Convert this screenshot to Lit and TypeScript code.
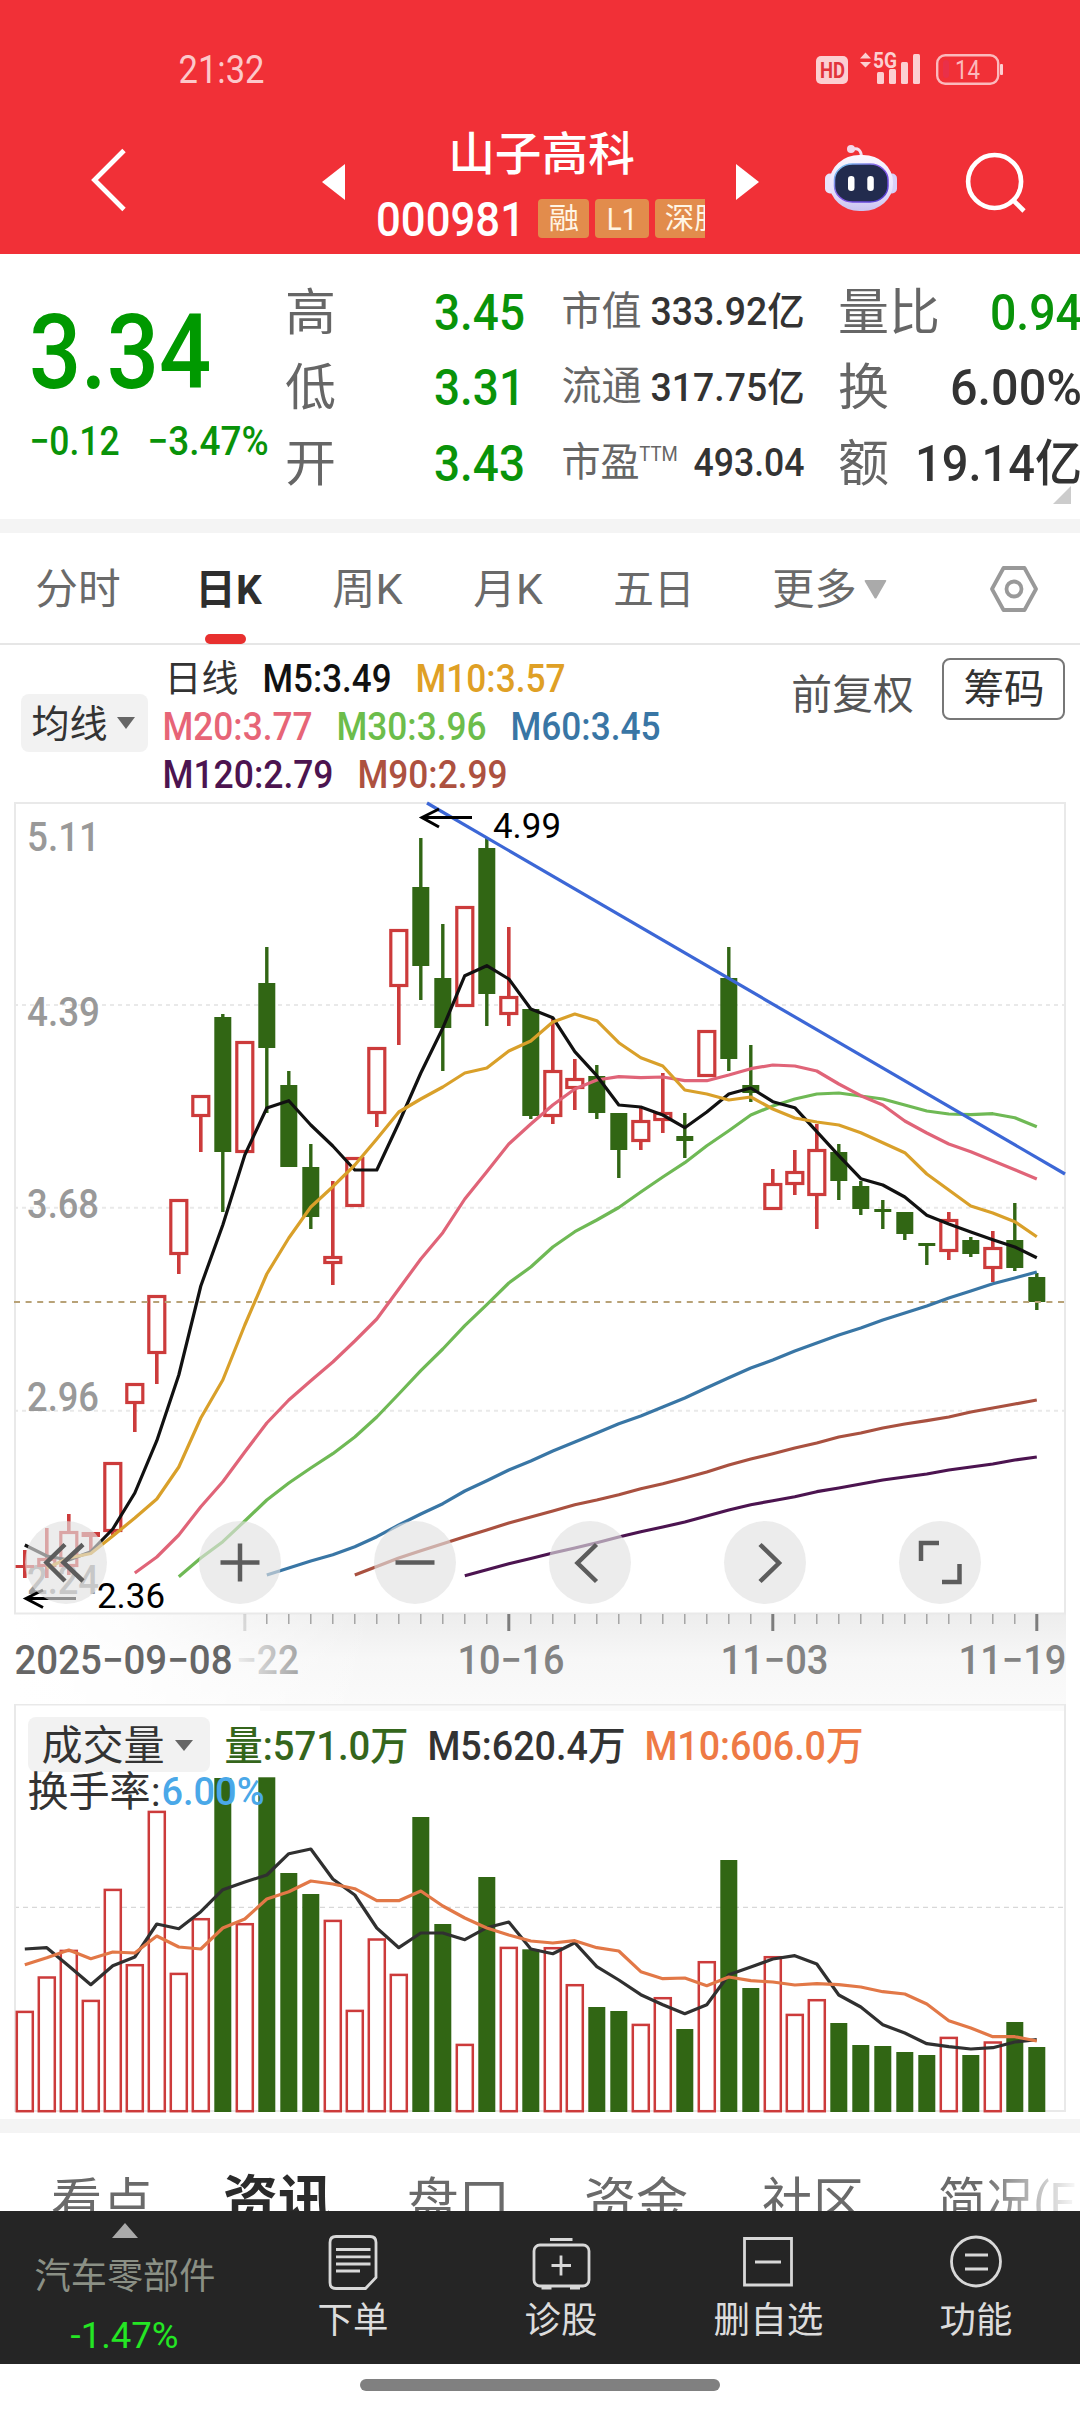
import { LitElement, html, svg, css } from "lit";
import { customElement } from "lit/decorators.js";

const fit = (text: string, width: number, size: number, cls = "", height = Math.round(size)) => {
  const b = size * 0.04;
  return html`<svg class="fit ${cls}" width=${width} height=${height}>
    <text x=${-b} y=${height / 2 + size * 0.36} font-size=${size} textLength=${width + 2 * b} lengthAdjust="spacingAndGlyphs">${text}</text>
  </svg>`;
};

const X0 = 24.8;
const STEP = 22;
const px = (i: number) => +(X0 + STEP * i).toFixed(1);

type Candle = [up: 0 | 1, high: number, top: number, bottom: number, low: number];
const candles: Candle[] = [
  [1, 1550, 1565, 1568, 1578], [1, 1528, 1558, 1567, 1578], [1, 1514, 1531, 1567, 1575], [1, 1532, 1532, 1537, 1552],
  [1, 1462, 1462, 1532, 1535], [1, 1383, 1383, 1404, 1432], [1, 1295, 1295, 1354, 1384], [1, 1199, 1199, 1255, 1274],
  [1, 1095, 1095, 1117, 1152], [0, 1014, 1017, 1152, 1212], [1, 1041, 1041, 1153, 1153], [0, 947, 983, 1048, 1113],
  [0, 1071, 1085, 1167, 1167], [0, 1144, 1167, 1217, 1229], [1, 1181, 1256, 1264, 1285], [1, 1157, 1157, 1207, 1207],
  [1, 1047, 1047, 1114, 1127], [1, 929, 929, 987, 1045], [0, 838, 887, 966, 1000], [0, 924, 978, 1028, 1071],
  [1, 906, 906, 1007, 1007], [0, 838, 848, 994, 1026], [1, 927, 996, 1015, 1026], [0, 1009, 1009, 1116, 1119],
  [1, 1018, 1070, 1117, 1124], [1, 1059, 1078, 1089, 1110], [0, 1065, 1076, 1113, 1119], [0, 1113, 1113, 1150, 1178],
  [1, 1106, 1120, 1142, 1150], [1, 1073, 1112, 1121, 1133], [0, 1113, 1136, 1141, 1158], [1, 1030, 1030, 1077, 1077],
  [0, 947, 978, 1059, 1071], [0, 1045, 1085, 1093, 1102], [1, 1169, 1183, 1210, 1210], [1, 1150, 1171, 1185, 1195],
  [1, 1124, 1149, 1196, 1229], [0, 1144, 1152, 1181, 1200], [0, 1181, 1186, 1209, 1215], [0, 1200, 1209, 1212, 1229],
  [0, 1212, 1212, 1234, 1240], [0, 1243, 1243, 1246, 1265], [1, 1212, 1219, 1252, 1260], [0, 1237, 1240, 1254, 1257],
  [1, 1231, 1247, 1269, 1282], [0, 1203, 1240, 1268, 1271], [0, 1273, 1277, 1302, 1310],
];

interface Series { cls: string; start: number; ys: number[]; }
const averages: Series[] = [
  { cls: "m30", start: 7, ys: [1576.7, 1558, 1541.7, 1521, 1500, 1483, 1468, 1453.7, 1437, 1417, 1394, 1370.7, 1349, 1325.7, 1304.7, 1283, 1267, 1247, 1231.7, 1220, 1207.5, 1192, 1177, 1162.7, 1145.7, 1130.7, 1115, 1106, 1099, 1094, 1093, 1096, 1099, 1105, 1111, 1114, 1114.7, 1113.7, 1117.7, 1126.7] },
  { cls: "m60", start: 11, ys: [1575, 1568, 1561, 1554.7, 1546.7, 1536.7, 1525, 1514, 1503.7, 1491, 1480.7, 1470, 1461, 1451, 1442, 1433, 1423.7, 1416, 1407, 1398, 1387.7, 1377.7, 1368, 1360, 1351, 1343, 1335, 1328, 1320, 1313, 1306, 1298, 1291, 1283.7, 1278, 1272] },
  { cls: "m90", start: 15, ys: [1575, 1566.5, 1558, 1550.7, 1543.7, 1536.7, 1530, 1523, 1517, 1511, 1504.7, 1500, 1494.7, 1488.7, 1483.7, 1478, 1472, 1465, 1459, 1453.7, 1448, 1443, 1437, 1433, 1428, 1424, 1420.7, 1417, 1412, 1408, 1404, 1400] },
  { cls: "m120", start: 20, ys: [1575.7, 1569.7, 1563.7, 1558.5, 1553, 1548, 1542.7, 1537, 1531.7, 1527, 1522, 1516, 1510, 1504.7, 1500.7, 1496.7, 1491.7, 1488, 1484, 1480, 1477, 1474, 1470, 1467, 1464, 1460, 1457] },
  { cls: "m20", start: 5, ys: [1573, 1557, 1535, 1506.7, 1481.7, 1452, 1423, 1400, 1380.7, 1362, 1341, 1319, 1289, 1259, 1232.7, 1199, 1171.7, 1144, 1124, 1105, 1089, 1080, 1076.7, 1077.7, 1077, 1080.7, 1080.7, 1075, 1068.7, 1065, 1066, 1071, 1084, 1095.7, 1105, 1121, 1133, 1144, 1151.7, 1160.7, 1169.7, 1179] },
  { cls: "m5", start: 0, ys: [1545, 1556, 1560, 1551.7, 1529, 1493, 1440.7, 1375, 1286, 1225, 1155, 1108, 1100.7, 1125, 1146, 1170, 1170, 1123, 1073, 1028, 975.7, 965.7, 979, 1009, 1017.7, 1051.7, 1075.7, 1105, 1107, 1115, 1127.7, 1112, 1094, 1088, 1101.7, 1107.7, 1131.7, 1155.7, 1178.7, 1185, 1197, 1215.3, 1224, 1232, 1239.7, 1247, 1257.7] },
  { cls: "m10", start: 1, ys: [1568, 1558, 1553.5, 1536, 1518, 1499, 1467, 1418, 1380, 1325, 1274, 1238, 1207, 1186.7, 1165, 1139, 1112, 1099, 1087, 1073, 1068, 1051, 1041, 1022, 1014, 1020.7, 1042.7, 1057.7, 1066, 1090, 1094, 1100, 1097, 1109, 1118, 1122, 1125, 1132.7, 1142.7, 1152.7, 1174, 1190, 1206, 1213, 1221.7, 1236.7] },
];

const volumeTops = [2011.7, 1977.3, 1950.7, 2000.7, 1889.7, 1965, 1811.7, 1973.7, 1919, 1778, 1924, 1777.3, 1873, 1894, 1920.7, 2010.7, 1939.3, 1974.7, 1817, 1924, 2044.7, 1877, 1947.7, 1949.3, 1948, 1985, 2007, 2011, 2024.7, 1998, 2029, 1962, 1860, 1988, 1957, 2014.7, 2000, 2023, 2045, 2046, 2052, 2055, 2037.7, 2055, 2042.3, 2022, 2047];

const volumeAverages: Series[] = [
  { cls: "v5", start: 0, ys: [1949, 1947.7, 1966, 1984.7, 1965.7, 1957, 1924, 1928.7, 1911.7, 1889.7, 1882, 1875, 1853.7, 1849, 1879, 1895, 1928, 1947.7, 1933, 1933, 1939.7, 1927.7, 1922, 1949, 1953.7, 1942.7, 1966.7, 1980, 1994.7, 2004.7, 2013.7, 2004.7, 1974.7, 1967, 1959, 1955.7, 1964, 1995, 2007, 2024.7, 2033, 2043.7, 2046.7, 2049, 2047.7, 2042, 2039.7] },
  { cls: "v10", start: 0, ys: [1964.7, 1957.7, 1950, 1958.7, 1952, 1953, 1936, 1947, 1949, 1928, 1919, 1899, 1891.7, 1881, 1884, 1888.7, 1900.7, 1900.7, 1891, 1906, 1918, 1928, 1935, 1941, 1943, 1940.7, 1947.7, 1951, 1971.7, 1978.7, 1978, 1985.7, 1977, 1980.7, 1982, 1985, 1983.7, 1984.7, 1987, 1991.7, 1994, 2004, 2020.7, 2028, 2036.7, 2036.7, 2041] },
];

const line = (s: Series) =>
  svg`<polyline class="line ${s.cls}" points=${s.ys.map((y, k) => `${px(s.start + k)},${y}`).join(" ")} />`;

const candle = ([up, high, top, bottom, low]: Candle, i: number) => {
  const x = px(i);
  if (up) {
    const body = bottom - top < 6
      ? svg`<rect class="up-fill" x=${x - 9.2} y=${top} width="18.4" height=${bottom - top} />`
      : svg`<rect class="up-box" x=${x - 8} y=${top + 1.5} width="16" height=${bottom - top - 3} />`;
    return svg`
      ${high < top ? svg`<rect class="up-fill" x=${x - 1.8} y=${high} width="3.6" height=${top - high} />` : ""}
      ${low > bottom ? svg`<rect class="up-fill" x=${x - 1.8} y=${bottom} width="3.6" height=${low - bottom} />` : ""}
      ${body}`;
  }
  return svg`
    <rect class="down-fill" x=${x - 1.7} y=${high} width="3.4" height=${low - high} />
    <rect class="down-fill" x=${x - 8.5} y=${top} width="17" height=${bottom - top} />`;
};

const volumeBar = (top: number, i: number) => {
  const x = px(i);
  return candles[i][0]
    ? svg`<rect class="up-box thin" x=${x - 8} y=${top + 0.2} width="16" height=${2111 - top} />`
    : svg`<rect class="down-fill" x=${x - 8.5} y=${top} width="17" height=${2112 - top} />`;
};

@customElement("app-root")
export class AppRoot extends LitElement {
  static styles = css`
    :host { display: block; width: 1080px; height: 2412px; overflow: hidden; background: #fff; color: #333;
      font-family: Roboto, "Noto Sans CJK SC", sans-serif; }
    * { box-sizing: border-box; }
    svg { display: block; flex: none; }
    .fit { overflow: visible; fill: currentColor; font-weight: 500; }
    .thin-type { font-weight: 400; }
    .bold { font-weight: 700; }
    .grey { color: #666; }
    .up { color: #099309; }
    .price { color: #009900; }

    .top { background: #f13037; height: 254px; color: #fff; }
    .status { height: 110px; padding: 28px 0 0 180px; display: flex; align-items: center; color: #fcc8ca; }
    .status-icons { margin-left: 552px; }
    .nav { height: 144px; display: flex; align-items: center; }
    .back { margin-left: 89px; }
    .prev { margin-left: 193px; }
    .ident { margin-left: 32px; width: 328px; height: 144px; padding-top: 20px; overflow: hidden; display: flex; flex-direction: column; align-items: center; }
    .code-row { width: 328px; margin-top: 21px; display: flex; align-items: center; overflow: hidden; height: 42px; padding-left: 1px; }
    .tag { flex: none; height: 39px; border-radius: 4px; background: #e28c4c; color: #fff5e4; margin-left: 6px; display: flex; align-items: center; justify-content: center; }
    .tag-a { width: 51px; margin-left: 15px; }
    .tag-b { width: 54px; }
    .tag-c { width: 108px; justify-content: flex-start; padding-left: 11px; }
    .next { margin-left: 30px; }
    .robot { margin-left: 64px; margin-top: -8px; }
    .search { margin-left: 64px; }

    .quote { height: 265px; display: flex; position: relative; }
    .last { width: 287px; padding: 45px 0 0 33px; }
    .change { display: flex; gap: 31px; margin-top: 18px; margin-left: -2px; }
    .col { padding-top: 20px; display: flex; flex-direction: column; margin-right: 40px; }
    .ca { width: 236px; }
    .cb { width: 240px; }
    .cc { width: 240px; margin-right: 0; margin-left: -3px; }
    .cell { height: 75.5px; display: flex; justify-content: space-between; align-items: center; }
    .cb .cell { margin-top: -1px; margin-bottom: 1px; }
    .pe { display: flex; align-items: center; gap: 2px; }
    .ttm { margin-top: -16px; }
    .expand { position: absolute; right: 9px; bottom: 15px; }
    .band { height: 14px; background: #f4f4f4; }

    .tabs { height: 112px; border-bottom: 2px solid #e6e6e6; display: flex; padding-left: 37px; position: relative; }
    .tab { height: 112px; display: flex; align-items: center; position: relative; color: #6a6a6a; }
    .tab.on { color: #2e2e2e; }
    .tab.on::after { content: ""; position: absolute; left: 8px; bottom: 1px; width: 41px; height: 10px; border-radius: 5px; background: #e8302f; }
    .t2 { margin-left: 78px; } .t3 { margin-left: 74px; } .t4 { margin-left: 74px; } .t5 { margin-left: 74px; } .t6 { margin-left: 81px; gap: 9px; }
    .gear { margin-left: 103px; }

    .legend { height: 156px; display: flex; align-items: flex-start; }
    .pick { background: #f2f2f2; border-radius: 8px; display: flex; align-items: center; }
    .ma { margin: 49px 0 0 21px; width: 127px; height: 58px; padding-left: 12px; gap: 11px; }
    .values { width: 520px; margin-left: 16px; padding-top: 9px; display: flex; flex-direction: column; }
    .row { height: 48px; display: flex; align-items: center; gap: 27px; }
    .row.first { padding-left: 2px; }
    .adjust { margin: 29px 0 0 109px; color: #555; }
    .chips { margin: 13px 0 0 30px; width: 123px; height: 62px; border: 2px solid #777; border-radius: 8px; display: flex; align-items: center; justify-content: center; }

    .c5 { color: #111; } .c10 { color: #dfa025; } .c20 { color: #e76577; } .c30 { color: #6cbd4b; } .c60 { color: #3976a5; } .c90 { color: #ad5140; } .c120 { color: #4c1450; }

    .chart { position: relative; height: 903px; }
    .controls { position: absolute; left: 24.500px; top: 720px; display: flex; gap: 92.900px; }
    .ctl { width: 82px; height: 83px; border-radius: 50%; background: rgba(226, 226, 226, 0.64); }
    .ctl svg { width: 82px; height: 83px; fill: none; stroke: #5c5c5c; stroke-width: 4.500; }
    .volume { position: relative; height: 415px; }
    .vhead { position: absolute; left: 28px; top: 13px; }
    .vrow { display: flex; align-items: center; }
    .vpick { width: 182px; height: 55px; padding: 2px 0 0 15px; gap: 12px; margin-right: 16px; }
    .vnum { display: flex; padding-top: 2px; }
    .vr2 { gap: 4px; padding-left: 1px; }
    .m { margin-right: 22px; }
    .vol { color: #35661c; } .vm10 { color: #ee7a45; } .turn { color: #4aa8e8; }

    .line { fill: none; stroke-width: 3.200; stroke-linejoin: round; }
    .m5 { stroke: #111; } .m10 { stroke: #d9a02a; } .m20 { stroke: #e06478; } .m30 { stroke: #6fb955; }
    .m60 { stroke: #3976a5; } .m90 { stroke: #a95140; } .m120 { stroke: #4c1450; }
    .v5 { stroke: #303030; } .v10 { stroke: #e27847; }
    .up-fill { fill: #cc3b3b; }
    .up-box { fill: #fff; stroke: #cc3b3b; stroke-width: 3.200; }
    .up-box.thin { stroke-width: 2.500; }
    .down-fill { fill: #316614; }
    .frame { fill: none; stroke: #e9e9e9; stroke-width: 2; }
    .grid { stroke: #e9e9e9; stroke-width: 2; stroke-dasharray: 4 4; }
    .vgrid { stroke: #d8d8d8; stroke-width: 1.200; stroke-dasharray: 5 4; }
    .now { stroke: #b8a277; stroke-width: 2; stroke-dasharray: 6 5.600; }
    .trend { stroke: #3c67d6; stroke-width: 3.200; }
    .arrow { fill: none; stroke: #000; stroke-width: 3; }
    .plabel { fill: #999; font-size: 40px; font-weight: 500; }
    .mark { fill: #000; font-size: 35px; }
    .date { fill: #838383; font-size: 40px; font-weight: 500; }
    .date.start { fill: #666; }
    .date.faded { fill: url(#fade); }
    .tick { stroke: #999; stroke-width: 1.300; }
    .tick.major { stroke: #7d7d7d; stroke-width: 3; }

    .more { height: 78px; overflow: hidden; display: flex; position: relative; padding: 43px 0 0 53px; color: #6a6a6a; }
    .more .sel { color: #2b2b2b; margin: -2px 78px 0 74px; }
    .more .n { margin-right: 78px; }
    .more::after { content: ""; position: absolute; right: 0; top: 0; width: 100px; height: 78px; background: linear-gradient(90deg, rgba(255, 255, 255, 0), #fff); }

    .bar { height: 153px; background: #252525; display: flex; color: #dcdcdc; }
    .sector { width: 249px; display: flex; flex-direction: column; align-items: center; padding-top: 12px; }
    .sname { color: #8b9085; margin-top: 20px; }
    .spct { color: #24e624; margin-top: 23px; }
    .act { width: 207.700px; display: flex; flex-direction: column; align-items: center; padding-top: 18px; gap: 9px; }
    .act svg.ico { fill: none; stroke: #d8d8d8; stroke-width: 2.800; }
    .home { height: 48px; display: flex; justify-content: center; padding-top: 15px; }
    .pill { width: 360px; height: 12px; border-radius: 6px; background: #808080; }
  `;

  private header() {
    return html`<div class="top">
      <div class="status">
        ${fit("21:32", 83, 38, "thin-type")}
        <svg class="status-icons" width="190" height="34" viewBox="814 52 190 34" fill="#fccfd1">
          <rect x="815" y="56" width="32" height="28" rx="5" />
          <text x="819" y="78" font-size="22" font-weight="700" fill="#e2343b" textLength="25" lengthAdjust="spacingAndGlyphs">HD</text>
          <path d="M864.5 52.5l5.5 6h-11zM864.5 67.5l5.5-5.500h-11z" />
          <text x="872" y="68" font-size="22" font-weight="700" textLength="24" lengthAdjust="spacingAndGlyphs">5G</text>
          <rect x="876" y="72" width="7" height="12" rx="1.500" /><rect x="888" y="69" width="7" height="15" rx="1.500" />
          <rect x="900" y="62" width="7" height="22" rx="1.500" /><rect x="912" y="54" width="7" height="30" rx="1.500" />
          <rect x="936.2" y="55.200" width="61" height="28.500" rx="8" fill="none" stroke="#fbb9bc" stroke-width="2.400" />
          <rect x="942" y="60" width="6" height="18" rx="3" fill="#e93049" />
          <rect x="999" y="64" width="3" height="11" rx="1" />
          <text x="954" y="78.500" font-size="25" textLength="25" lengthAdjust="spacingAndGlyphs" fill="#fbb9bc">14</text>
        </svg>
      </div>
      <div class="nav">
        <svg class="back" width="40" height="72" viewBox="0 0 40 72"><path d="M35 4.500L5.500 34L35 63.500" fill="none" stroke="#fff" stroke-width="4.800" /></svg>
        <svg class="prev" width="23" height="38" fill="#fff"><path d="M23 1v36L0 19z" /></svg>
        <div class="ident">
          ${fit("山子高科", 183, 46)}
          <div class="code-row">
            ${fit("000981", 145, 49)}
            <span class="tag tag-a">${fit("融", 28, 29, "thin-type")}</span>
            <span class="tag tag-b">${fit("L1", 28, 31, "thin-type")}</span>
            <span class="tag tag-c">${fit("深股通", 86, 29, "thin-type")}</span>
          </div>
        </div>
        <svg class="next" width="24" height="38" fill="#fff"><path d="M1 1v36L24 19z" /></svg>
        <svg class="robot" width="76" height="68" viewBox="823 145 76 68">
          <defs>
            <linearGradient id="shell" x1="0" y1="0" x2="0" y2="1"><stop offset="0" stop-color="#fbf7ff" /><stop offset=".6" stop-color="#e9e3fb" /><stop offset="1" stop-color="#c9c2f0" /></linearGradient>
            <linearGradient id="rim" x1="0" y1="0" x2="1" y2="1"><stop offset="0" stop-color="#74d6f0" /><stop offset=".45" stop-color="#8a5be8" /><stop offset="1" stop-color="#4d3bd0" /></linearGradient>
          </defs>
          <path d="M852 150.500Q861 147.500 861.500 158" fill="none" stroke="#f6dff0" stroke-width="3" />
          <circle cx="851" cy="150" r="4" fill="#f3d7ea" />
          <rect x="825" y="174.500" width="12" height="20" rx="5" fill="#e9e3fb" /><rect x="885" y="174.500" width="12" height="20" rx="5" fill="#d8d0f7" />
          <rect x="829.5" y="156" width="63.500" height="56" rx="30" ry="27" fill="url(#shell)" />
          <rect x="834.5" y="165" width="53.500" height="38" rx="18" ry="16" fill="#222b4e" stroke="url(#rim)" stroke-width="1.500" />
          <rect x="848" y="177" width="6.500" height="15" rx="3.200" fill="#fff" /><rect x="867.3" y="177" width="6.500" height="15" rx="3.200" fill="#fff" />
        </svg>
        <svg class="search" width="64" height="64" viewBox="963 149 64 64" fill="none" stroke="#fff" stroke-width="4.600"><circle cx="994.600" cy="180.500" r="26.500" /><path d="M1013.500 199.500L1024 210" /></svg>
      </div>
    </div>`;
  }

  private quote() {
    return html`<div class="quote">
      <div class="last">
        ${fit("3.34", 174, 103, "price", 104)}
        <div class="change">${fit("−0.12", 87, 40, "up")}${fit("−3.47%", 118, 40, "up")}</div>
      </div>
      <div class="col ca">
        <div class="cell">${fit("高", 47, 50, "grey thin-type")}${fit("3.45", 87, 50, "up")}</div>
        <div class="cell">${fit("低", 47, 50, "grey thin-type")}${fit("3.31", 87, 50, "up")}</div>
        <div class="cell">${fit("开", 47, 50, "grey thin-type")}${fit("3.43", 87, 50, "up")}</div>
      </div>
      <div class="col cb">
        <div class="cell">${fit("市值", 77, 40, "grey thin-type")}${fit("333.92亿", 151, 39)}</div>
        <div class="cell">${fit("流通", 77, 40, "grey thin-type")}${fit("317.75亿", 151, 39)}</div>
        <div class="cell"><span class="pe">${fit("市盈", 75, 40, "grey thin-type")}${fit("TTM", 37, 20, "grey thin-type ttm")}</span>${fit("493.04", 108, 39)}</div>
      </div>
      <div class="col cc">
        <div class="cell">${fit("量比", 98, 50, "grey thin-type")}${fit("0.94", 88, 50, "up")}</div>
        <div class="cell">${fit("换", 47, 50, "grey thin-type")}${fit("6.00%", 128, 50)}</div>
        <div class="cell">${fit("额", 47, 50, "grey thin-type")}${fit("19.14亿", 163, 50)}</div>
      </div>
      <svg class="expand" width="18" height="18" fill="#ccc"><path d="M18 0v18H0z" /></svg>
    </div>
    <div class="band"></div>`;
  }

  private tabs() {
    return html`<div class="tabs">
      <div class="tab">${fit("分时", 82, 42, "thin-type")}</div>
      <div class="tab on t2">${fit("日K", 63, 41, "bold")}</div>
      <div class="tab t3">${fit("周K", 67, 42, "thin-type")}</div>
      <div class="tab t4">${fit("月K", 66, 42, "thin-type")}</div>
      <div class="tab t5">${fit("五日", 78, 41, "thin-type")}</div>
      <div class="tab t6">${fit("更多", 81, 42, "thin-type")}<svg width="23" height="19" fill="#aaa"><path d="M1.500 0h20q1.500 0 .5 1.500L12.500 18q-1 1-2 0L.8 1.500Q0 0 1.500 0z" /></svg></div>
      <div class="tab gear"><svg width="48" height="48" viewBox="0 0 48 48" fill="none" stroke="#999" stroke-width="3.800" stroke-linejoin="round"><path d="M13.500 3h21L46 24L34.500 45h-21L2 24z" /><circle cx="24" cy="24" r="7.500" /></svg></div>
    </div>
    <div class="legend">
      <div class="pick ma">${fit("均线", 73, 38, "thin-type")}<svg width="18" height="12" fill="#666"><path d="M0 0h18L9 12z" /></svg></div>
      <div class="values">
        <div class="row first">${fit("日线", 71, 37, "thin-type")}${fit("M5:3.49", 126, 38, "c5")}${fit("M10:3.57", 147, 38, "c10")}</div>
        <div class="row">${fit("M20:3.77", 147, 38, "c20")}${fit("M30:3.96", 147, 38, "c30")}${fit("M60:3.45", 147, 38, "c60")}</div>
        <div class="row">${fit("M120:2.79", 168, 38, "c120")}${fit("M90:2.99", 147, 38, "c90")}</div>
      </div>
      <div class="adjust">${fit("前复权", 119, 41, "thin-type")}</div>
      <div class="chips">${fit("筹码", 78, 40, "thin-type")}</div>
    </div>`;
  }

  private kChart() {
    const labels: [string, number, number][] = [["5.11", 851, 70], ["4.39", 1025.500, 70], ["3.68", 1218, 69], ["2.96", 1411, 69], ["2.24", 1594, 69]];
    const dates: [string, number, number, string][] = [["2025-09-08", 16, 215, "start"], ["10-16", 459, 104, ""], ["11-03", 722, 105, ""], ["11-19", 960, 105, ""]];
    return html`<div class="chart">
      <svg width="1080" height="903" viewBox="0 801 1080 903">
        <defs>
          <linearGradient id="fall" x1="0" y1="0" x2="0" y2="1"><stop offset="0" stop-color="#ededed" /><stop offset=".5" stop-color="#f7f7f7" /><stop offset="1" stop-color="#fafafa" /></linearGradient>
          <linearGradient id="veil" x1="0" y1="0" x2="1" y2="0"><stop offset="0" stop-color="#fff" /><stop offset=".3" stop-color="#fff" stop-opacity=".85" /><stop offset="1" stop-color="#fff" stop-opacity="0" /></linearGradient>
          <linearGradient id="fade" gradientUnits="userSpaceOnUse" x1="236" y1="0" x2="310" y2="0"><stop offset="0" stop-color="#eee" /><stop offset="1" stop-color="#989898" /></linearGradient>
        </defs>
        <rect x="14" y="1614" width="1052" height="90" fill="url(#fall)" />
        <rect x="14" y="1614" width="360" height="90" fill="url(#veil)" />
        ${[1005, 1207.7, 1410.7].map((y) => svg`<line class="grid" x1="14" x2="1066" y1=${y} y2=${y} />`)}
        <rect class="frame" x="15" y="803" width="1050" height="810.500" />
        ${labels.map(([t, y, w]) => svg`<text class="plabel" x="27" y=${y} textLength=${w + 3} lengthAdjust="spacingAndGlyphs">${t}</text>`)}
        ${candles.map(candle)}
        <line class="now" x1="14" x2="1066" y1="1302" y2="1302" />
        ${averages.map(line)}
        <line class="trend" x1="427" y1="803" x2="1065" y2="1174" />
        <path class="arrow" d="M472 817.500H423M439 809L422 817.500L439 827M76 1598.500H28M43 1590L26 1598.500L43 1607.500" />
        <text class="mark" x="493" y="838" textLength="68" lengthAdjust="spacingAndGlyphs">4.99</text>
        <text class="mark" x="97" y="1608" textLength="68" lengthAdjust="spacingAndGlyphs">2.36</text>
        ${candles.map((_, i) => {
          if (i < 10) return "";
          const major = i === 10 || i % 12 === 10;
          return svg`<line class="tick ${major ? "major" : ""}" opacity=${i === 10 ? 0.25 : 1} x1=${px(i)} x2=${px(i)} y1="1614" y2=${major ? 1631 : 1624} />`;
        })}
        ${dates.map(([t, x, w, c]) => svg`<text class="date ${c}" x=${x - 1.5} y="1674" textLength=${w + 3} lengthAdjust="spacingAndGlyphs">${t.replace(/-/g, "−")}</text>`)}
        <text class="date faded" x="236" y="1674" textLength="63" lengthAdjust="spacingAndGlyphs">−22</text>
      </svg>
      <div class="controls">
        <div class="ctl"><svg viewBox="-41 -41.500 82 83"><path d="M-1 -18L-19.500 0L-1 18.500M17 -18L-2.500 0L17 18.500" /></svg></div>
        <div class="ctl"><svg viewBox="-41 -41.500 82 83"><path d="M-19.500 0H19.500M0 -19V19" /></svg></div>
        <div class="ctl"><svg viewBox="-41 -41.500 82 83"><path d="M-19.500 0H19.500" /></svg></div>
        <div class="ctl"><svg viewBox="-41 -41.500 82 83"><path d="M6.500 -18L-12.500 0.500L6.500 19" /></svg></div>
        <div class="ctl"><svg viewBox="-41 -41.500 82 83"><path d="M-5 -18L14 0.500L-5 19" /></svg></div>
        <div class="ctl"><svg viewBox="-41 -41.500 82 83"><path d="M-19 -1.500V-19.500H-1M2 19.500H19.500V1.500" /></svg></div>
      </div>
    </div>`;
  }

  private volume() {
    return html`<div class="volume">
      <svg width="1080" height="415" viewBox="0 1704 1080 415">
        <rect x="260" y="1704" width="806" height="7" fill="#fafafa" />
        <line class="vgrid" x1="14" x2="1066" y1="1907.300" y2="1907.300" />
        <rect class="frame" x="15" y="1704.500" width="1050" height="406.500" />
        ${volumeTops.map(volumeBar)}
        ${volumeAverages.map(line)}
      </svg>
      <div class="vhead">
        <div class="vrow">
          <div class="pick vpick">${fit("成交量", 120, 41, "thin-type")}<svg width="18" height="11" fill="#666"><path d="M0 0h18L9 11z" /></svg></div>
          <div class="vnum">${fit("量:571.0万", 181, 40, "vol m")}${fit("M5:620.4万", 195, 40, "m")}${fit("M10:606.0万", 216, 40, "vm10")}</div>
        </div>
        <div class="vrow vr2">${fit("换手率:", 130, 41, "thin-type", 38)}${fit("6.00%", 100, 39, "turn", 38)}</div>
      </div>
    </div>
    <div class="band"></div>`;
  }

  private footer() {
    return html`<div class="more">
      ${fit("看点", 98, 51, "thin-type")}${fit("资讯", 106, 54, "bold sel")}${fit("盘口", 99, 51, "thin-type n")}${fit("资金", 100, 51, "thin-type n")}${fit("社区", 98, 51, "thin-type n")}${fit("简况(F10)", 204, 51, "thin-type")}
    </div>
    <div class="bar">
      <div class="sector">
        <svg width="26" height="15" fill="#aaa"><path d="M13 0L26 15H0z" /></svg>
        ${fit("汽车零部件", 178, 36, "thin-type sname")}
        ${fit("-1.47%", 105, 36, "thin-type spct")}
      </div>
      <div class="act">
        <svg class="ico" width="64" height="64" viewBox="-32 -32 64 64"><path d="M-17 -24.500H17Q23 -24.500 23 -18.500V16.500L12.500 27.500H-17Q-23 27.500 -23 21.500V-18.500Q-23 -24.500 -17 -24.500zM-17 -11.500H17.500M-17 -4.200H17.500M-17 3H17.500M-17 10H7" /></svg>
        ${fit("下单", 68, 36, "thin-type")}
      </div>
      <div class="act">
        <svg class="ico" width="64" height="64" viewBox="-32 -32 64 64"><rect x="-27" y="-16" width="55" height="41" rx="6" /><path d="M-11 -21.500H11.500M-9.500 4.500H10M0 -5.500V14.500M-19.500 27h10M9 27h10" /></svg>
        ${fit("诊股", 70, 36, "thin-type")}
      </div>
      <div class="act">
        <svg class="ico" width="64" height="64" viewBox="-32 -32 64 64"><path d="M-23.500 -22.500H23.500V24H-23.500zM-13 1H13" /></svg>
        ${fit("删自选", 107, 36, "thin-type")}
      </div>
      <div class="act">
        <svg class="ico" width="64" height="64" viewBox="-32 -32 64 64"><circle cx="0" cy="0.500" r="24.500" /><path d="M-11 -6H12M-11 8H12" /></svg>
        ${fit("功能", 70, 36, "thin-type")}
      </div>
    </div>
    <div class="home"><div class="pill"></div></div>`;
  }

  render() {
    return html`${this.header()}${this.quote()}${this.tabs()}${this.kChart()}${this.volume()}${this.footer()}`;
  }
}
